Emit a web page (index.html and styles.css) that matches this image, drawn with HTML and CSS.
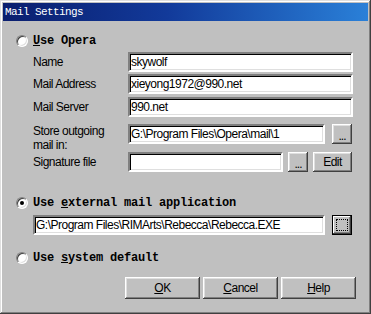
FILE: index.html
```html
<!DOCTYPE html>
<html>
    <head>
        <title>Mail Settings</title>
        <link rel="stylesheet" href="styles.css">
    </head>
    <body>
        <div class="window">
            <div class="titlebar">Mail Settings</div>
            <div class="dialog">
                <div class="option"><span class="radio"></span><span><u>U</u>se Opera</span></div>

                <div class="fields">
                    <div class="row">
                        <span class="label">Name</span>
                        <span class="field">skywolf</span>
                    </div>
                    <div class="row r2">
                        <span class="label">Mail Address</span>
                        <span class="field">xieyong1972@990.net</span>
                    </div>
                    <div class="row r3">
                        <span class="label">Mail Server</span>
                        <span class="field">990.net</span>
                    </div>
                    <div class="row r4">
                        <span class="label two">Store outgoing<br>mail in:</span>
                        <span class="field">G:\Program Files\Opera\mail\1</span>
                        <span class="button small dots">...</span>
                    </div>
                    <div class="row r5">
                        <span class="label">Signature file</span>
                        <span class="field"></span>
                        <span class="button small dots">...</span>
                        <span class="button edit">Edit</span>
                    </div>
                </div>

                <div class="option ext"><span class="radio checked"></span><span>Use <u>e</u>xternal mail application</span></div>
                <div class="row extrow">
                    <span class="field">G:\Program Files\RIMArts\Rebecca\Rebecca.EXE</span>
                    <span class="button small focus"><span class="focusrect"></span></span>
                </div>

                <div class="option sys"><span class="radio"></span><span>Use <u>s</u>ystem default</span></div>

                <div class="actions">
                    <span class="button wide"><u>O</u>K</span>
                    <span class="button wide"><u>C</u>ancel</span>
                    <span class="button wide"><u>H</u>elp</span>
                </div>
            </div>
        </div>
    </body>
</html>
```

FILE: styles.css
```css
body {
    margin: 0;
    background: #c0c0c0;
}
.window {
    width: 371px;
    height: 314px;
    box-sizing: border-box;
    padding: 3px;
    background: #c0c0c0;
    box-shadow: inset -1px -1px #404040, inset 1px 1px #dfdfdf, inset -2px -2px #808080, inset 2px 2px #fff;
    font-family: "Liberation Sans", Arial, sans-serif;
    font-size: 12px;
    letter-spacing: -0.5px;
    color: #000;
}
.titlebar {
    height: 18px;
    line-height: 18px;
    padding-left: 2px;
    background: linear-gradient(to right, #0a1e6e, #123a9a 45%, #2a80d8);
    color: #fff;
    font-family: "Liberation Mono", monospace;
    font-size: 11px;
    letter-spacing: -0.6px;
}
.dialog {
    display: flex;
    flex-direction: column;
    padding: 0 15px 0 13px;
}
.option {
    display: flex;
    align-items: center;
    height: 14px;
    margin-top: 13px;
    font-family: "Liberation Mono", monospace;
    font-weight: bold;
    font-size: 12px;
    letter-spacing: -0.2px;
}
.option.ext {
    margin-top: 24px;
}
.option.sys {
    margin-top: 16px;
}
.radio {
    width: 12px;
    height: 12px;
    box-sizing: border-box;
    border-radius: 50%;
    border: 1px solid;
    border-color: #808080 #fff #fff #808080;
    box-shadow: inset 1px 1px #404040, inset -1px -1px #dfdfdf;
    background: #fff;
    margin-right: 5px;
    display: flex;
    align-items: center;
    justify-content: center;
}
.radio.checked::after {
    content: "";
    width: 4px;
    height: 4px;
    border-radius: 50%;
    background: #000;
}
.fields {
    display: flex;
    flex-direction: column;
    margin: 4px 0 0 17px;
}
.row {
    display: flex;
    align-items: center;
    gap: 6px;
}
.r2 { margin-top: 2px; }
.r3 { margin-top: 3px; }
.r4 { margin-top: 7px; align-items: flex-start; }
.r5 { margin-top: 0; gap: 5px; }
.label {
    width: 95px;
    flex: none;
    margin-right: -6px;
}
.r5 .label {
    margin-right: -5px;
}
.label.two {
    line-height: 14px;
}
.field {
    flex: 1;
    height: 20px;
    line-height: 16px;
    box-sizing: border-box;
    padding-left: 1px;
    background: #fff;
    white-space: nowrap;
    overflow: hidden;
    border: 2px solid;
    border-color: #808080 #fff #fff #808080;
    box-shadow: inset 1px 1px #000, inset -1px -1px #dfdfdf;
}
.r4 .field { margin-right: 1px; }
.r4 .button { margin-right: 1px; }
.button {
    flex: none;
    height: 20px;
    box-sizing: border-box;
    display: flex;
    align-items: center;
    justify-content: center;
    background: #c0c0c0;
    box-shadow: inset -1px -1px #404040, inset 1px 1px #fff, inset -2px -2px #808080, inset 2px 2px #dfdfdf;
}
.button.small {
    width: 20px;
}
.dots {
    padding-top: 4px;
    letter-spacing: -1px;
}
.button.edit {
    width: 39px;
    margin-right: 1px;
}
.extrow {
    margin: 5px 1px 0 17px;
}
.extrow .field { margin-right: 1px; }
.button.focus {
    box-shadow: inset -1px -1px #000, inset 1px 1px #000, inset -2px -2px #404040, inset 2px 2px #fff, inset -3px -3px #808080;
}
.focusrect {
    width: 12px;
    height: 12px;
    box-sizing: border-box;
    border: 1px dotted #000;
}
.actions {
    display: flex;
    justify-content: flex-end;
    gap: 3px;
    margin-top: 12px;
    margin-right: -3px;
}
.button.wide {
    width: 75px;
    height: 22px;
}
```
